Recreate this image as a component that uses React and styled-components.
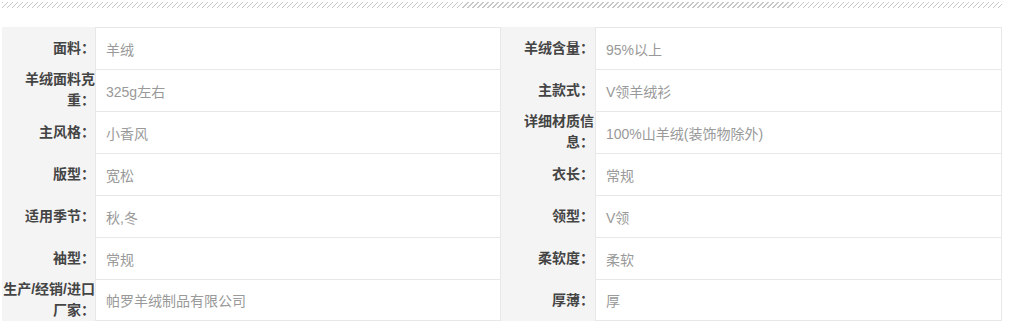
import styled, { createGlobalStyle } from "styled-components";

const GlobalStyle = createGlobalStyle`
  body {
    margin: 0;
    background: #fff;
    font-family: "Liberation Sans", Arial, "Noto Sans CJK SC", sans-serif;
  }
`;

const rows = [
  ["面料：", "羊绒", "羊绒含量：", "95%以上"],
  ["羊绒面料克重：", "325g左右", "主款式：", "V领羊绒衫"],
  ["主风格：", "小香风", "详细材质信息：", "100%山羊绒(装饰物除外)"],
  ["版型：", "宽松", "衣长：", "常规"],
  ["适用季节：", "秋,冬", "领型：", "V领"],
  ["袖型：", "常规", "柔软度：", "柔软"],
  ["生产/经销/进口厂家：", "帕罗羊绒制品有限公司", "厚薄：", "厚"],
];

export default function App() {
  return (
    <>
      <GlobalStyle />
      <Wrapper>
        <Stripe />
        <Table>
          {rows.map((r, i) => (
            <Row key={i} $last={i === rows.length - 1}>
              <Label>{r[0]}</Label>
              <Value>{r[1]}</Value>
              <Label $right>{r[2]}</Label>
              <Value $right>{r[3]}</Value>
            </Row>
          ))}
        </Table>
      </Wrapper>
    </>
  );
}

const Wrapper = styled.div`
  padding: 2px 0 0 2px;
  width: 1000px;
`;

const Stripe = styled.div`
  height: 6px;
  width: 1000px;
  background: repeating-linear-gradient(
    135deg,
    #c8c8c8 0 1px,
    transparent 1px 3.54px
  );
`;

const Table = styled.div`
  margin-top: 19px;
  display: flex;
  flex-direction: column;
`;

const Row = styled.div`
  display: grid;
  grid-template-columns: 93px 406px 94px 407px;
  height: 42px;
  box-sizing: border-box;
  & > div:nth-child(2n) {
    border-bottom: ${(p) => (p.$last ? "1px solid #e8e8e8" : "none")};
  }
`;

const Label = styled.div`
  background: #f4f4f4;
  display: flex;
  align-items: center;
  justify-content: flex-end;
  text-align: right;
  font-size: 14px;
  font-weight: bold;
  line-height: 21px;
  color: #444;
  padding: 0 ${(p) => (p.$right ? "1px" : "0")} 0 0;
  box-sizing: border-box;
`;

const Value = styled.div`
  display: flex;
  align-items: center;
  box-sizing: border-box;
  border: 1px solid #e8e8e8;
  border-bottom: none;
  margin-left: ${(p) => (p.$right ? "0" : "0")};
  padding: 0 0 0 10px;
  font-size: 14px;
  color: #999;
`;
